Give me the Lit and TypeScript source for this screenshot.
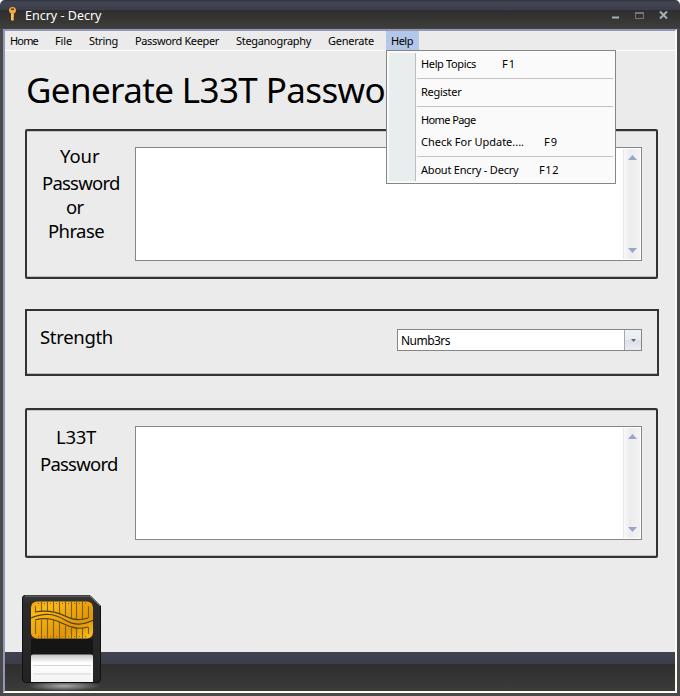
import { LitElement, html, svg, css } from "lit";
import { customElement, property } from "lit/decorators.js";

/** A single line of text whose tracking is adjusted to fill a given width. */
@customElement("fit-text")
class FitText extends LitElement {
  @property() text = "";
  @property({ type: Number }) width = 0;
  static styles = css`
    :host { display: block; white-space: pre; }
    .run { display: inline-block; }
  `;
  render() { return html`<span class="run">${this.text}</span>`; }
  updated() {
    const run = this.renderRoot.querySelector(".run") as HTMLElement;
    run.style.letterSpacing = "0px";
    const natural = run.getBoundingClientRect().width;
    run.style.letterSpacing = (this.width - natural) / this.text.length + "px";
  }
}

@customElement("scroll-area")
class ScrollArea extends LitElement {
  static styles = css`
    :host { display: flex; justify-content: flex-end; box-sizing: border-box; width: 507px; height: 114px; border: 1px solid #868686; background: #fff; padding: 1px; }
    .bar { border-left: 1px solid #e8e8e8; background: linear-gradient(90deg, #f9f9f9, #ececec 40%, #f3f3f3); display: flex; flex-direction: column; justify-content: space-between; align-items: center; padding: 6px 0; box-sizing: border-box; width: 17px; }
    svg { display: block; }
  `;
  render() {
    return html`<div class="bar">
      <svg width="9" height="5"><path d="M4.500 0L9 5H0Z" fill="#9aa5ca"/></svg>
      <svg width="9" height="5"><path d="M0 0H9L4.500 5Z" fill="#9aa5ca"/></svg>
    </div>`;
  }
}

const menus: [string, number][] = [
  ["Home", 28], ["File", 17], ["String", 29], ["Password Keeper", 84],
  ["Steganography", 75], ["Generate", 46],
];

@customElement("app-root")
class AppRoot extends LitElement {
  static styles = css`
    :host { display: block; width: 680px; height: 696px; font-family: "Noto Sans", sans-serif; color: #000; }
    .window { position: relative; box-sizing: border-box; width: 680px; height: 696px; overflow: hidden; border-radius: 5px 5px 0 0; background: linear-gradient(#2f3139 0, #424552 2px, #3c3f4a 10px, #2e2e2e 10px, #3d3d3b 28px, #4a4a4a 29px); padding: 0 3px 3px; }
    .title { height: 29px; display: flex; align-items: center; color: #fff; }
    .key { margin-left: 5px; width: 9px; height: 17px; margin-top: -1px; }
    .title fit-text { margin-left: 8px; font-size: 12.500px; line-height: 18px; margin-top: 3px; }
    .controls { margin-left: auto; margin-right: 9px; display: block; }
    .client { box-sizing: border-box; height: 664px; border-top: 2px solid #9396b4; border-left: 2px solid #8f98b8; border-right: 2px solid #fafaf4; border-bottom: 2px solid #fafaf4; background: #ebebeb; display: flex; flex-direction: column; }
    .menubar { height: 19px; flex: none; border-bottom: 1px solid #fff; display: grid; grid-template-columns: 45px 34px 46px 101px 92px 63px 33px; font-size: 11px; line-height: 20px; }
    .menubar fit-text { padding-left: 5px; }
    .menubar .open { background: #b3c7e8; }
    h1 { margin: 14px 0 0 21px; font-size: 35px; font-weight: 400; line-height: 50px; height: 50px; }
    .panel { box-sizing: border-box; width: 633px; margin-left: 20px; border: 2px solid #333; border-radius: 2px; box-shadow: inset 0 1px #c4c4c4, inset 0 -1px #bdbdbd; display: flex; flex: none; }
    .phrase { margin-top: 14px; height: 150px; }
    .strength { margin-top: 30px; height: 67px; width: 634px; border-radius: 0; box-shadow: inset 0 -1px #bdbdbd; }
    .result { margin-top: 32px; height: 150px; }
    .labels { width: 108px; flex: none; font-size: 18.500px; line-height: 24px; }
    .phrase .labels { padding-top: 13px; }
    .result .labels { padding-top: 15px; }
    .strength .labels { padding-top: 14px; }
    .a { margin-left: 33px; } .b { margin: 3px 0 0 15px; } .c { margin-left: 39px; } .d { margin-left: 21px; }
    .e { margin-left: 29px; } .f { margin: 3px 0 0 13px; } .g { margin-left: 13px; }
    scroll-area { margin-top: 16px; }
    .combo { box-sizing: border-box; margin: 18px 0 0 262px; width: 245px; height: 22px; border: 1px solid #868686; background: #fff; display: flex; font-size: 12px; line-height: 21px; padding-left: 3px; justify-content: space-between; }
    .drop { width: 16px; border-left: 1px solid #aaa; background: linear-gradient(#eef1f5, #e9edf2 50%, #dbe0e7 51%, #e9edf2); display: flex; align-items: center; justify-content: center; }
    .footer { margin-top: auto; height: 39px; flex: none; background: linear-gradient(#40434f 0, #3b3d48 12px, #2e2e2e 12px, #3b3b3a 39px); }
    .card { position: absolute; left: 18px; top: 590px; }
    .menu { position: absolute; left: 386px; top: 50px; box-sizing: border-box; width: 230px; height: 134px; border: 1px solid #868686; background: #fafafa; display: flex; padding: 2px; font-size: 11px; }
    .gutter { box-sizing: border-box; width: 27px; background: #e8eeee; border-right: 1px solid #bdbdbd; }
    .items { flex: 1; padding-left: 1px; }
    .item { height: 22px; line-height: 22px; display: flex; padding-left: 4px; }
    .sep { height: 1px; background: #c3c3c3; margin: 3px 0 2px; }
  `;
  item(text: string, w: number, gap = 0, key = "", kw = 0) {
    return html`<div class="item"><fit-text text=${text} width=${w}></fit-text>${key ? html`<fit-text style="margin-left:${gap}px" text=${key} width=${kw}></fit-text>` : ""}</div>`;
  }
  card() {
    return html`<svg class="card" width="90" height="102" viewBox="18 590 90 102">
      <defs>
        <linearGradient id="gold" x1="0" y1="0" x2="1" y2="1"><stop offset="0" stop-color="#f3a60a"/><stop offset=".2" stop-color="#fdb913"/><stop offset=".45" stop-color="#f0a50c"/><stop offset=".7" stop-color="#e29407"/><stop offset="1" stop-color="#ffc21c"/></linearGradient>
        <linearGradient id="body" x1="0" y1="0" x2="0" y2="1"><stop offset="0" stop-color="#3a3a3a"/><stop offset=".1" stop-color="#2b2b2b"/><stop offset="1" stop-color="#232323"/></linearGradient>
        <linearGradient id="paper" x1="0" y1="0" x2="0" y2="1"><stop offset="0" stop-color="#c3c0c1"/><stop offset=".3" stop-color="#fff"/><stop offset="1" stop-color="#f3f3f3"/></linearGradient>
        <radialGradient id="glow"><stop offset="0" stop-color="#aaa"/><stop offset="1" stop-color="#aaa" stop-opacity="0"/></radialGradient>
        <clipPath id="chip"><rect x="31" y="601.500" width="62" height="37" rx="6"/></clipPath>
      </defs>
      <ellipse cx="64" cy="686" rx="37" ry="5" fill="url(#glow)"/>
      <path d="M25 595.500H90L100.500 606V679Q100.500 682.500 97 682.500H26Q22.500 682.500 22.500 679V598Q22.500 595.500 25 595.500Z" fill="url(#body)" stroke="#101010"/>
      <path d="M25 596H90L100 606" fill="none" stroke="#777" stroke-width="1"/>
      <rect x="31" y="639" width="62" height="16" fill="#151515"/>
      <rect x="31" y="601.500" width="62" height="37" rx="6" fill="url(#gold)"/>
      <g clip-path="url(#chip)">
        ${[35.5, 41.5, 47.5, 53.5, 59.5, 65.5, 71.5, 76.5, 82.5, 88.5].map((x, i) => svg`<path d="M${x} ${i === 0 || i === 9 ? 606 : 601}V${[612, 611, 611, 611, 613, 616, 618, 619, 619, 618][i]}M${x} ${[621, 620, 619, 620, 622, 626, 628, 628, 628, 627][i]}V${i === 0 || i === 9 ? 634 : 639}" stroke="#75621f" stroke-width="1.100"/>`)}
        ${[38.5, 44.5, 50.5, 56.5, 62.5, 68.5, 74.5, 79.5, 85.5].map(x => svg`<path d="M${x} 603V604M${x} 636V637" stroke="#75621f"/>`)}
        <path d="M35 612C47 610 55 611 65 616S81 620 88 618M31 618C45 612 55 614 65 620S83 625 94 620M35 620C46 617 54 619 64 624S80 629 88 627" fill="none" stroke="#4e4214" stroke-width="1.200"/>
      </g>
      <path d="M31 656Q31 654.500 33 654.500H91Q93 654.500 93 656V682H31Z" fill="url(#paper)"/>
      <path d="M33 665.500H91M33 674H91" stroke="#d5d5d5"/>
    </svg>`;
  }
  render() {
    return html`<div class="window">
      <div class="title">
        <svg class="key" viewBox="0 0 9 17"><path d="M4.500 1A3.500 3.500 0 0 0 1 4.500C1 6 2 7 3 7.500V14L4.500 15 6 14V13L5.500 12 6 11V7.500C7 7 8 6 8 4.500A3.500 3.500 0 0 0 4.500 1Z" fill="#f0a83c"/><path d="M4 8V14" stroke="#ffdc84"/><rect x="3" y="2.500" width="3" height="1.500" fill="#5a3a14"/></svg>
        <fit-text text="Encry - Decry" width="76.500"></fit-text>
        <svg class="controls" width="58" height="14" viewBox="610 8 58 14"><path d="M612 17.500H619" stroke="#a6afb9" stroke-width="2"/><rect x="635.500" y="12.500" width="8" height="6" fill="none" stroke="#73777b"/><path d="M635 13H644" stroke="#73777b" stroke-width="2"/><path d="M660 11.500L667 18.500M667 11.500L660 18.500" stroke="#a6afb9" stroke-width="2"/></svg>
      </div>
      <div class="client">
        <div class="menubar">
          ${menus.map(([t, w]) => html`<fit-text text=${t} width=${w}></fit-text>`)}
          <fit-text class="open" text="Help" width="22"></fit-text>
        </div>
        <h1><fit-text text="Generate L33T Password" width="393"></fit-text></h1>
        <section class="panel phrase">
          <div class="labels">
            <fit-text class="a" text="Your" width="39.500"></fit-text>
            <fit-text class="b" text="Password" width="77.500"></fit-text>
            <fit-text class="c" text="or" width="17.500"></fit-text>
            <fit-text class="d" text="Phrase" width="56"></fit-text>
          </div>
          <scroll-area></scroll-area>
        </section>
        <section class="panel strength">
          <div class="labels"><fit-text class="g" text="Strength" width="73"></fit-text></div>
          <div class="combo"><fit-text text="Numb3rs" width="49"></fit-text>
            <div class="drop"><svg width="5" height="3"><path d="M0 0H5L2.500 3Z" fill="#666"/></svg></div>
          </div>
        </section>
        <section class="panel result">
          <div class="labels">
            <fit-text class="e" text="L33T" width="40"></fit-text>
            <fit-text class="f" text="Password" width="77.500"></fit-text>
          </div>
          <scroll-area></scroll-area>
        </section>
        <div class="footer"></div>
      </div>
      ${this.card()}
      <div class="menu">
        <div class="gutter"></div>
        <div class="items">
          ${this.item("Help Topics", 55, 26, "F1", 14)}
          <div class="sep"></div>
          ${this.item("Register", 40.5)}
          <div class="sep"></div>
          ${this.item("Home Page", 54.5)}
          ${this.item("Check For Update....", 103, 20, "F9", 14)}
          <div class="sep"></div>
          ${this.item("About Encry - Decry", 97.5, 20.5, "F12", 20)}
        </div>
      </div>
    </div>`;
  }
}
